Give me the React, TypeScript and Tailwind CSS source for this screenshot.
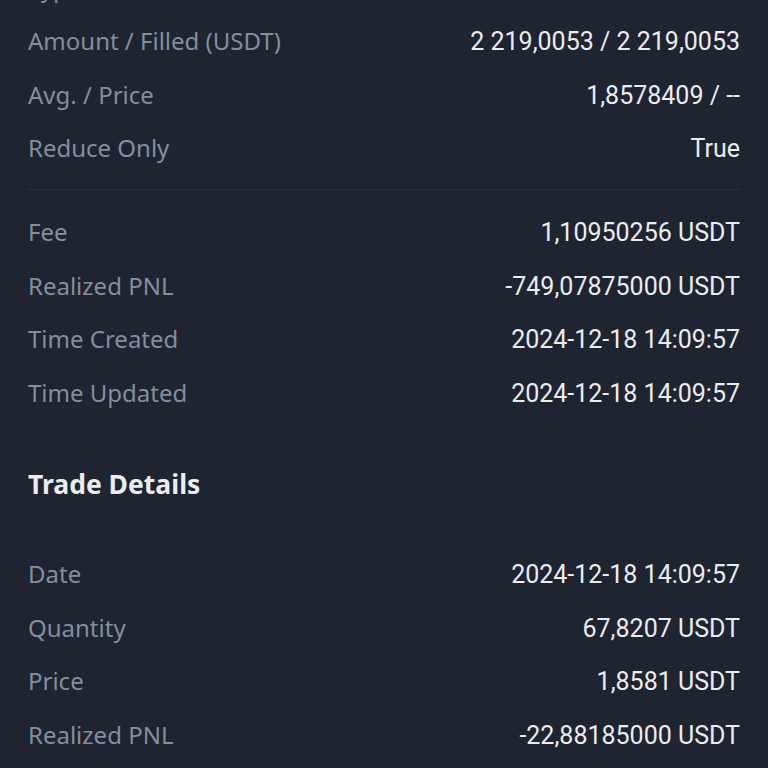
import React from "react";

const Row = ({ label, value }: { label: string; value: string }) => (
  <div className="flex h-[53.5px] items-center justify-between">
    <span className="font-['Noto_Sans',sans-serif] text-[24px] text-[#848e9c]">{label}</span>
    <span className="pt-[1px] font-['Roboto',sans-serif] text-[25px] text-[#eaecef]">{value}</span>
  </div>
);

export default function App() {
  return (
    <div className="h-[768px] w-[768px] overflow-hidden bg-[#1e2430]">
      <div className="-mt-[39px] px-[28px]">
        <Row label="Type" value="" />
        <Row label="Amount / Filled (USDT)" value="2 219,0053 / 2 219,0053" />
        <Row label="Avg. / Price" value="1,8578409 / --" />
        <Row label="Reduce Only" value="True" />
        <div className="mt-[14px] mb-[15.5px] h-px bg-[#2b323c]" />
        <Row label="Fee" value="1,10950256 USDT" />
        <Row label="Realized PNL" value="-749,07875000 USDT" />
        <Row label="Time Created" value="2024-12-18 14:09:57" />
        <Row label="Time Updated" value="2024-12-18 14:09:57" />
        <div className="flex h-[128px] items-center pt-[3px]">
          <span className="font-['Noto_Sans',sans-serif] text-[26.5px] font-bold text-[#eaecef]">Trade Details</span>
        </div>
        <Row label="Date" value="2024-12-18 14:09:57" />
        <Row label="Quantity" value="67,8207 USDT" />
        <Row label="Price" value="1,8581 USDT" />
        <Row label="Realized PNL" value="-22,88185000 USDT" />
      </div>
    </div>
  );
}
